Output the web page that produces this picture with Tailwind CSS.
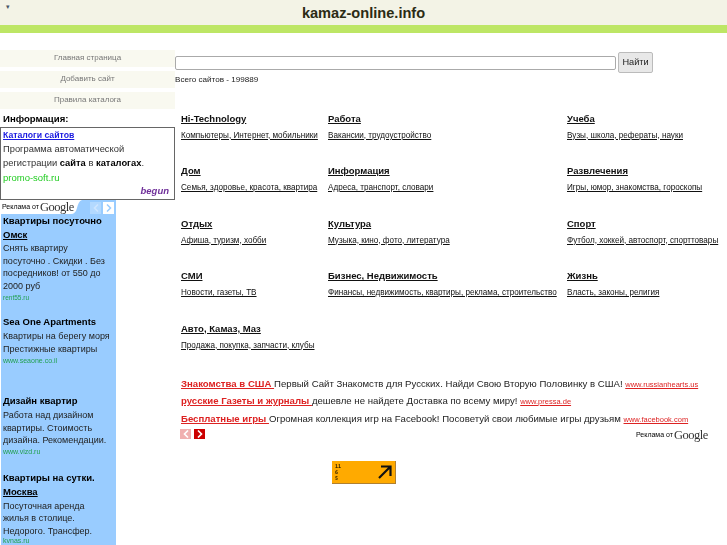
<!DOCTYPE html>
<html lang="ru">

<head>
    <meta charset="UTF-8" />
    <title>kamaz-online.info</title>
    <script src="https://cdn.jsdelivr.net/npm/@tailwindcss/browser@4"></script>
</head>

<body class="bg-white h-[545px] overflow-hidden font-['Liberation_Sans',Arial,sans-serif] text-black">
  <div class="blur-[0.3px]">
    <!-- header -->
    <header class="h-[25px] bg-[#f3f3e6] relative flex justify-center items-center">
        <span class="absolute left-[6px] top-[3px] text-[7px] leading-[8px] text-gray-600">▾</span>
        <h1 class="text-[14.6px] leading-[25px] pt-[1px] font-bold text-[#2b2b14]">kamaz-online.info</h1>
    </header>
    <div class="h-[8px] bg-[#bde665]"></div>

    <div class="flex">
        <!-- left column -->
        <aside class="w-[175px] shrink-0 pt-[17px]">
            <nav class="flex flex-col gap-[4px] text-[8px] text-[#777] text-center">
                <a class="h-[17px] leading-[16px] bg-[#f9f9f0]">Главная страница</a>
                <a class="h-[17px] leading-[16px] bg-[#f9f9f0]">Добавить сайт</a>
                <a class="h-[17px] leading-[16px] bg-[#f9f9f0]">Правила каталога</a>
            </nav>
            <h3 class="mt-[2px] h-[16px] pl-[3px] text-[9.6px] leading-[15px] font-bold">Информация:</h3>
            <div class="h-[73px] border border-[#666] px-[2px] text-[9.35px] leading-[13.5px] text-[#333] relative">
                <a class="block text-[8.7px] leading-[15px] font-bold text-[#1a1ae0] underline">Каталоги сайтов</a>
                <p>Программа автоматической<br />регистрации <b class="text-black">сайта</b> в <b class="text-black">каталогах</b>.</p>
                <p class="mt-[1px] text-[9.5px] text-[#22cc22]">promo-soft.ru</p>
                <span class="absolute right-[5px] bottom-[1px] text-[9.5px] leading-[14px] font-bold italic text-[#70309a]">begun</span>
            </div>

            <!-- google ads -->
            <div class="ml-[1px] w-[115px] h-[345px] bg-[#99ccff] overflow-hidden">
                <div class="h-[14px] flex items-center relative">
                    <svg class="absolute left-0 top-0" width="81" height="14" viewBox="0 0 81 14"><path d="M0 0H81C78 1 77 4 76 8 75 12 73 14 70 14H0Z" fill="#fff" /></svg>
                    <span class="relative text-[7px] leading-[14px] ml-[1px] whitespace-nowrap">Реклама от</span>
                    <span class="relative font-['Liberation_Serif',serif] text-[12.5px] leading-[14px] ml-[1px] tracking-[-0.5px] text-[#333]">Google</span>
                    <div class="absolute left-[89px] top-[2px] w-[11px] h-[12px] flex items-center justify-center bg-[#b3d9ff]"><svg width="6" height="8" viewBox="0 0 6 8" fill="none" stroke="#cfe6ff" stroke-width="1.5"><path d="M5 0.5 1.5 4 5 7.5" /></svg></div>
                    <div class="absolute left-[102px] top-[2px] w-[11px] h-[12px] flex items-center justify-center bg-white"><svg width="6" height="8" viewBox="0 0 6 8" fill="none" stroke="#99ccff" stroke-width="1.5"><path d="M1 0.5 4.5 4 1 7.5" /></svg></div>
                </div>
                <div class="pl-[2px] text-[9px] leading-[12.5px] text-[#222] whitespace-nowrap">
                    <div class="h-[93px]">
                        <p class="text-[9.5px] leading-[13.5px] font-bold text-black">Квартиры посуточно<br /><u>Омск</u></p>
                        <p class="mt-[1px]">Снять квартиру<br />посуточно . Скидки . Без<br />посредников! от 550 до<br />2000 руб</p>
                        <p class="text-[6.5px] leading-[11px] text-[#22a050]">rent55.ru</p>
                    </div>
                    <div class="mt-[8px]">
                        <p class="text-[9.5px] font-bold text-black leading-[14px]">Sea One Apartments</p>
                        <p class="mt-[1px]">Квартиры на берегу моря<br />Престижные квартиры</p>
                        <p class="text-[7px] leading-[11px] text-[#22a050]">www.seaone.co.il</p>
                    </div>
                    <div class="mt-[28px]">
                        <p class="text-[9.5px] font-bold text-black leading-[14px]">Дизайн квартир</p>
                        <p class="mt-[1px]">Работа над дизайном<br />квартиры. Стоимость<br />дизайна. Рекомендации.</p>
                        <p class="-mt-[1px] text-[7px] leading-[11px] text-[#22a050]">www.vizd.ru</p>
                    </div>
                    <div class="mt-[14px]">
                        <p class="text-[9.5px] font-bold text-black leading-[14px]">Квартиры на сутки.<br /><u>Москва</u></p>
                        <p class="mt-[1px]">Посуточная аренда<br />жилья в столице.<br />Недорого. Трансфер.</p>
                        <p class="-mt-[1px] text-[7px] leading-[10px] text-[#22a050]">kvnas.ru</p>
                    </div>
                </div>
            </div>
        </aside>

        <!-- main -->
        <main class="flex-1 min-w-0">
            <div class="pt-[19px] flex items-center h-[39px]">
                <input type="text" class="w-[441px] h-[14px] bg-white border border-[#aaa] rounded-[2px] mt-[1px]" />
                <button class="ml-[2px] w-[35px] h-[21px] pt-[1px] bg-[#e8e8e8] border border-[#bbb] rounded-[2px] text-[9.2px] text-[#222]">Найти</button>
            </div>
            <p class="mt-[1px] text-[8.1px] leading-[14px] text-[#222]">Всего сайтов - 199889</p>

            <div class="pl-[6px] mt-[24.5px] grid grid-cols-[147px_239px_auto] auto-rows-[52.5px] text-[#111]">
                <div><a class="block text-[9.5px] leading-[14px] font-bold underline">Hi-Technology</a><a class="block mt-[4px] text-[8.15px] leading-[12px] underline whitespace-nowrap">Компьютеры, Интернет, мобильники</a></div>
                <div><a class="block text-[9.5px] leading-[14px] font-bold underline">Работа</a><a class="block mt-[4px] text-[8.15px] leading-[12px] underline whitespace-nowrap">Вакансии, трудоустройство</a></div>
                <div><a class="block text-[9.5px] leading-[14px] font-bold underline">Учеба</a><a class="block mt-[4px] text-[8.15px] leading-[12px] underline whitespace-nowrap">Вузы, школа, рефераты, науки</a></div>

                <div><a class="block text-[9.5px] leading-[14px] font-bold underline">Дом</a><a class="block mt-[4px] text-[8.15px] leading-[12px] underline whitespace-nowrap">Семья, здоровье, красота, квартира</a></div>
                <div><a class="block text-[9.5px] leading-[14px] font-bold underline">Информация</a><a class="block mt-[4px] text-[8.15px] leading-[12px] underline whitespace-nowrap">Адреса, транспорт, словари</a></div>
                <div><a class="block text-[9.5px] leading-[14px] font-bold underline">Развлечения</a><a class="block mt-[4px] text-[8.15px] leading-[12px] underline whitespace-nowrap">Игры, юмор, знакомства, гороскопы</a></div>

                <div><a class="block text-[9.5px] leading-[14px] font-bold underline">Отдых</a><a class="block mt-[4px] text-[8.15px] leading-[12px] underline whitespace-nowrap">Афиша, туризм, хобби</a></div>
                <div><a class="block text-[9.5px] leading-[14px] font-bold underline">Культура</a><a class="block mt-[4px] text-[8.15px] leading-[12px] underline whitespace-nowrap">Музыка, кино, фото, литература</a></div>
                <div><a class="block text-[9.5px] leading-[14px] font-bold underline">Спорт</a><a class="block mt-[4px] text-[8.15px] leading-[12px] underline whitespace-nowrap">Футбол, хоккей, автоспорт, спорттовары</a></div>

                <div><a class="block text-[9.5px] leading-[14px] font-bold underline">СМИ</a><a class="block mt-[4px] text-[8.15px] leading-[12px] underline whitespace-nowrap">Новости, газеты, ТВ</a></div>
                <div><a class="block text-[9.5px] leading-[14px] font-bold underline">Бизнес, Недвижимость</a><a class="block mt-[4px] text-[8.15px] leading-[12px] underline whitespace-nowrap">Финансы, недвижимость, квартиры, реклама, строительство</a></div>
                <div><a class="block text-[9.5px] leading-[14px] font-bold underline">Жизнь</a><a class="block mt-[4px] text-[8.15px] leading-[12px] underline whitespace-nowrap">Власть, законы, религия</a></div>

                <div class="col-span-3"><a class="block text-[9.5px] leading-[14px] font-bold underline">Авто, Камаз, Маз</a><a class="block mt-[4px] text-[8.15px] leading-[12px] underline whitespace-nowrap">Продажа, покупка, запчасти, клубы</a></div>
            </div>

            <!-- text ads -->
            <div class="pl-[6px] mt-[0.5px] text-[9.6px] text-[#222] whitespace-nowrap">
                <p class="h-[17.5px] leading-[17.5px]"><a class="font-bold text-[#dd2222] underline">Знакомства в США </a>Первый Сайт Знакомств для Русских. Найди Свою Вторую Половинку в США! <a class="text-[7.5px] leading-[10px] text-[#dd2222] underline">www.russianhearts.us</a></p>
                <p class="h-[17.5px] leading-[17.5px]"><a class="font-bold text-[#dd2222] underline">русские Газеты и журналы </a>дешевле не найдете Доставка по всему миру! <a class="text-[7.5px] leading-[10px] text-[#dd2222] underline">www.pressa.de</a></p>
                <p class="h-[17.5px] leading-[17.5px]"><a class="font-bold text-[#dd2222] underline">Бесплатные игры </a>Огромная коллекция игр на Facebook! Посоветуй свои любимые игры друзьям <a class="text-[7.5px] leading-[10px] text-[#dd2222] underline">www.facebook.com</a></p>
            </div>
            <div class="pl-[5px] mt-[2px] h-[16px] flex items-start gap-[4px] relative">
                <span class="w-[11px] h-[10px] bg-[#f0b0b0] flex items-center justify-center"><svg width="6" height="8" viewBox="0 0 6 8" fill="none" stroke="#fff" stroke-width="1.6"><path d="M5 0.5 1.5 4 5 7.5" /></svg></span>
                <span class="w-[11px] h-[10px] -ml-[1px] bg-[#cc0000] flex items-center justify-center"><svg width="6" height="8" viewBox="0 0 6 8" fill="none" stroke="#fff" stroke-width="1.6"><path d="M1 0.5 4.5 4 1 7.5" /></svg></span>
                <div class="absolute left-[461px] -top-[1px] flex items-center whitespace-nowrap">
                    <span class="text-[7px] leading-[14px]">Реклама от</span>
                    <span class="font-['Liberation_Serif',serif] text-[12.5px] leading-[14px] ml-[1px] tracking-[-0.5px] text-[#333]">Google</span>
                </div>
            </div>

            <!-- counter -->
            <div class="ml-[157px] mt-[16px] w-[64px] h-[23px] bg-[#ffaa00] border-r border-b border-[#b08030] flex items-center justify-between pl-[3px] pr-[3px]">
                <div class="flex flex-col text-[5px] leading-[6px] font-bold font-['DejaVu_Sans_Mono',monospace] text-[#332200]"><span>11</span><span>6</span><span>5</span></div>
                <svg width="14" height="14" viewBox="0 0 14 14" fill="none" stroke="#111" stroke-width="2.2"><path d="M1 13 12 2M3 1.5h9.5V11" /></svg>
            </div>
        </main>
    </div>
  </div>
</body>

</html>
